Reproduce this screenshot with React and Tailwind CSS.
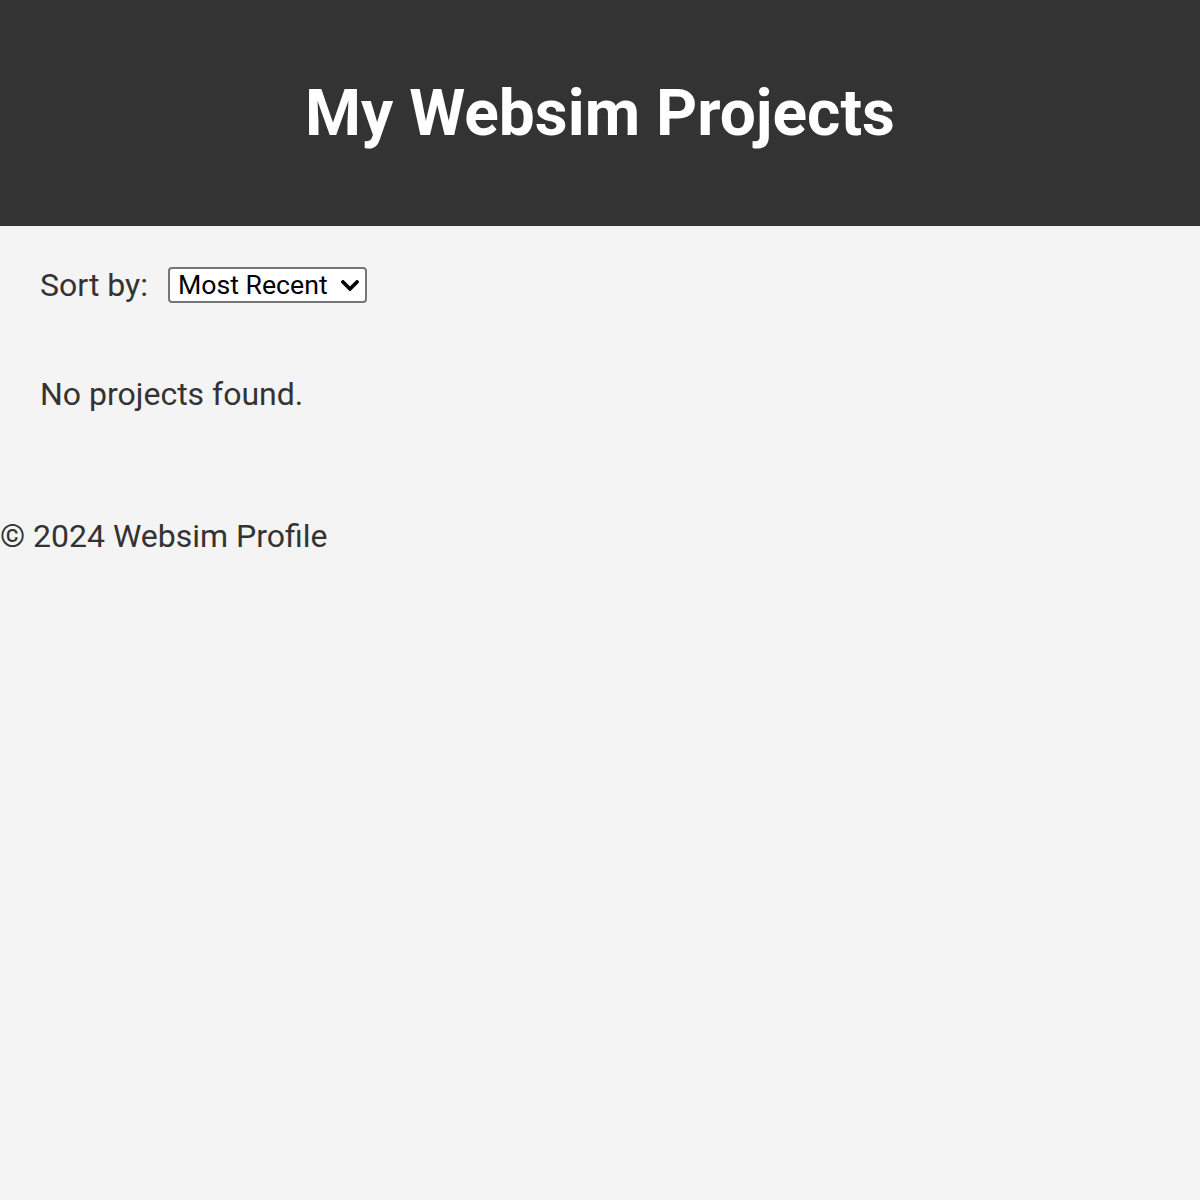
import React, { useState } from 'react';

const App = () => {
    const [sort, setSort] = useState('recent');

    return (
        <div className="min-h-[1200px] bg-[#f4f4f4] text-[#333333] font-['Roboto',_sans-serif]">
            <header className="h-[226px] bg-[#333333] flex items-center justify-center">
                <h1 className="text-[64px] font-bold text-white leading-[75px]">My Websim Projects</h1>
            </header>
            <main className="px-[40px] pt-[40px]">
                <div className="flex items-center h-[38px]">
                    <label htmlFor="sort" className="text-[32px] leading-[38px] mr-[20px]">Sort by:</label>
                    <div className="relative">
                        <select
                            id="sort"
                            value={sort}
                            onChange={(e) => setSort(e.target.value)}
                            className="block appearance-none w-[199px] h-[36px] text-[26.67px] leading-[32px] text-black bg-white border-2 border-[#767676] rounded-[4px] pl-[8px] pr-[34px]"
                        >
                            <option value="recent">Most Recent</option>
                            <option value="popular">Most Popular</option>
                            <option value="name">Name</option>
                        </select>
                        <svg
                            className="pointer-events-none absolute left-[173px] top-[13px]"
                            width="18"
                            height="11"
                            viewBox="0 0 18 11"
                            fill="none"
                        >
                            <path d="M2 2 L9 9 L16 2" stroke="black" strokeWidth="3.6" strokeLinecap="square" />
                        </svg>
                    </div>
                </div>
                <p className="mt-[72px] text-[32px] leading-[37.5px]">No projects found.</p>
            </main>
            <footer className="mt-[104px] text-[32px] leading-[37.5px]">© 2024 Websim Profile</footer>
        </div>
    );
};

export default App;
